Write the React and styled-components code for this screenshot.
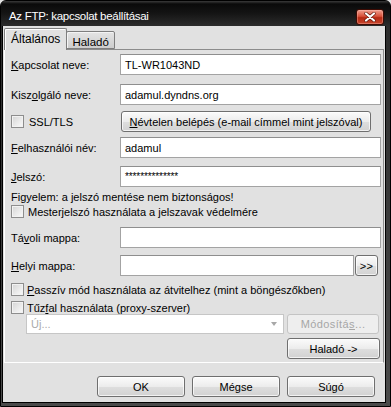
import React from 'react';
import styled, { createGlobalStyle } from 'styled-components';

const Global = createGlobalStyle`
  html, body { margin: 0; padding: 0; background: #e1e1e1; }
  body { font-family: "Liberation Sans", Arial, sans-serif; font-size: 11px; color: #000; }
  * { box-sizing: border-box; }
  u { text-decoration: underline; text-underline-offset: 1px; }
`;

const Window = styled.div`
  width: 391px;
  height: 407px;
  display: flex;
  flex-direction: column;
  border: 1px solid #000;
  border-radius: 6px 6px 0 0;
  background: linear-gradient(to bottom, #2a2a2a, #4a4a4a);
  overflow: hidden;
`;

const TitleBar = styled.div`
  height: 25px;
  flex: none;
  display: flex;
  align-items: flex-end;
  justify-content: space-between;
  padding: 0 6px 1px 8px;
  background: linear-gradient(to bottom, #3a3a3a 0px, #0a0a0a 3px, #141414 12px, #2c2c2c 25px);
`;

const TitleText = styled.span`
  align-self: center;
  margin-top: 6px;
  color: #fff;
  font-size: 11.5px;
  letter-spacing: -0.3px;
  line-height: 14px;
  white-space: nowrap;
`;

const CloseButton = styled.div`
  width: 28px;
  height: 16px;
  border: 1px solid #3d0b03;
  border-radius: 3px;
  background: linear-gradient(to bottom, #f0a090 0%, #d8513a 45%, #b52a14 55%, #c8452c 100%);
  display: flex;
  align-items: center;
  justify-content: center;
  box-shadow: inset 0 0 0 1px rgba(255, 200, 190, 0.35);
`;

const Body = styled.div`
  flex: 1;
  margin: 0 4px 3px 1px;
  border: 1px solid #000;
  border-top: none;
  background: #e1e1e1;
  padding: 2px 1px 4px 1px;
  display: flex;
  flex-direction: column;
`;

const TabStrip = styled.div`
  display: flex;
  align-items: flex-end;
  height: 22px;
  margin-bottom: -1px;
  position: relative;
  z-index: 1;
`;

const Tab = styled.div`
  height: ${p => (p.$active ? '22px' : '18px')};
  margin-bottom: ${p => (p.$active ? '0' : '1px')};
  margin-left: ${p => (p.$active ? '0' : '-1px')};
  padding: ${p => (p.$active ? '3px 6px 0 6px' : '3px 5px 0 5px')};
  border: 1px solid #7e7e7e;
  border-bottom: ${p => (p.$active ? 'none' : '1px solid #7e7e7e')};
  border-radius: 2px 2px 0 0;
  background: ${p => (p.$active ? '#e1e1e1' : 'linear-gradient(to bottom, #e4e4e4, #cdcdcd)')};
  box-shadow: ${p => (p.$active ? 'inset 1px 1px 0 #fff' : 'inset 1px 1px 0 #f4f4f4')};
  font-size: ${p => (p.$active ? '12px' : '11.5px')};
  line-height: 14px;
  white-space: nowrap;
`;

const Panel = styled.div`
  height: 314px;
  flex: none;
  border: 1px solid #8c8c8c;
  border-left-color: #fff;
  border-bottom-color: #fff;
  box-shadow: 0 0 0 0 transparent;
  padding: 0 2px 3px 6px;
  display: flex;
  flex-direction: column;
`;

const Row = styled.div`
  display: flex;
  align-items: center;
  height: ${p => p.$h}px;
  margin-top: ${p => p.$mt}px;
  padding-left: ${p => p.$indent || 0}px;
  justify-content: ${p => (p.$end ? 'flex-end' : 'flex-start')};
  gap: ${p => p.$gap || 0}px;
  flex: none;
`;

const Label = styled.label`
  width: 109px;
  flex: none;
  white-space: nowrap;
`;

const Text = styled.span`
  white-space: nowrap;
`;

const Field = styled.div`
  flex: 1;
  height: 21px;
  background: #fff;
  border: 1px solid #a3a3a3;
  border-top-color: #8e8e8e;
  padding: 0 4px;
  display: flex;
  align-items: center;
  white-space: nowrap;
  font-size: ${p => (p.$small ? '10px' : '11px')};
  letter-spacing: ${p => (p.$small ? '-0.1px' : '0')};
`;

const Button = styled.div`
  width: ${p => p.$w}px;
  height: ${p => p.$ht || 21}px;
  flex: none;
  margin-left: ${p => p.$ml || 0}px;
  margin-right: ${p => p.$mr || 0}px;
  border: 1px solid ${p => (p.$disabled ? '#c4c4c4' : '#6f6f6f')};
  border-radius: 3px;
  background: ${p =>
    p.$disabled
      ? '#eeeeee'
      : 'linear-gradient(to bottom, #fbfbfb 0%, #ececec 50%, #dedede 51%, #d2d2d2 100%)'};
  box-shadow: ${p => (p.$disabled ? 'none' : 'inset 0 0 0 1px rgba(255,255,255,0.7)')};
  color: ${p => (p.$disabled ? '#a6a6a6' : '#000')};
  display: flex;
  align-items: center;
  justify-content: center;
  white-space: nowrap;
  letter-spacing: ${p => (p.$wide ? '0.4px' : '0')};
`;

const Check = styled.span`
  width: 13px;
  height: 13px;
  flex: none;
  border: 1px solid #8d8d8d;
  background: linear-gradient(135deg, #d4d4d4 0%, #ececec 60%, #fafafa 100%);
  box-shadow: inset 0 0 0 1px #f2f2f2;
  margin-right: ${p => p.$mr || 3}px;
`;

const Combo = styled.div`
  flex: 1;
  height: 20px;
  background: #fff;
  border: 1px solid #c6c6c6;
  color: #ababab;
  display: flex;
  align-items: center;
  justify-content: space-between;
  padding: 0 6px 0 4px;
`;

const ComboArrow = styled.span`
  width: 0;
  height: 0;
  border-left: 3.5px solid transparent;
  border-right: 3.5px solid transparent;
  border-top: 4px solid #a8a8a8;
`;

const ButtonBar = styled.div`
  display: flex;
  justify-content: flex-end;
  gap: 7px;
  margin-top: 13px;
  margin-right: 9px;
`;

export default function App() {
  return (
    <>
      <Global />
      <Window>
        <TitleBar>
          <TitleText>Az FTP: kapcsolat beállításai</TitleText>
          <CloseButton>
            <svg width="14" height="10" viewBox="0 0 14 10">
              <path d="M3 1.5 L11 8.5 M11 1.5 L3 8.5" stroke="#5a1408" strokeWidth="3.4" strokeLinecap="round" />
              <path d="M3 1.5 L11 8.5 M11 1.5 L3 8.5" stroke="#fff" strokeWidth="2.2" strokeLinecap="round" />
            </svg>
          </CloseButton>
        </TitleBar>
        <Body>
          <TabStrip>
            <Tab $active>Általános</Tab>
            <Tab>Haladó</Tab>
          </TabStrip>
          <Panel>
            <Row $h={21} $mt={4}>
              <Label><u>K</u>apcsolat neve:</Label>
              <Field>TL-WR1043ND</Field>
            </Row>
            <Row $h={21} $mt={9}>
              <Label>Kisz<u>o</u>lgáló neve:</Label>
              <Field>adamul.dyndns.org</Field>
            </Row>
            <Row $h={21} $mt={6}>
              <Label as="div" style={{ display: 'flex', alignItems: 'center' }}>
                <Check $mr={5} />
                <Text>SSL/TLS</Text>
              </Label>
              <Button $w={250} $ml={1}><span><u>N</u>évtelen belépés (e-mail címmel mint jelszóval)</span></Button>
            </Row>
            <Row $h={21} $mt={5}>
              <Label><u>F</u>elhasználói név:</Label>
              <Field>adamul</Field>
            </Row>
            <Row $h={21} $mt={8}>
              <Label><u>J</u>elszó:</Label>
              <Field $small>**************</Field>
            </Row>
            <Row $h={13} $mt={3}>
              <Text>Figyelem: a jelszó mentése nem biztonságos!</Text>
            </Row>
            <Row $h={13} $mt={2}>
              <Check $mr={4} />
              <Text>Mesterjelszó használata a jelszavak védelmére</Text>
            </Row>
            <Row $h={21} $mt={9}>
              <Label>Tá<u>v</u>oli mappa:</Label>
              <Field />
            </Row>
            <Row $h={21} $mt={7}>
              <Label><u>H</u>elyi mappa:</Label>
              <Field />
              <Button $w={23} $ml={1} $mr={3} $wide>&gt;&gt;</Button>
            </Row>
            <Row $h={13} $mt={7}>
              <Check $mr={3} />
              <Text><u>P</u>asszív mód használata az átvitelhez (mint a böngészőkben)</Text>
            </Row>
            <Row $h={13} $mt={5}>
              <Check $mr={3} />
              <Text>Tűz<u>f</u>al használata (proxy-szerver)</Text>
            </Row>
            <Row $h={20} $mt={0} $indent={15} $gap={3}>
              <Combo>
                <span>Új...</span>
                <ComboArrow />
              </Combo>
              <Button $w={92} $ht={20} $mr={2} $disabled $wide>
                <span>Módosítá<u>s</u>...</span>
              </Button>
            </Row>
            <Row $h={21} $mt={4} $end>
              <Button $w={93} $mr={1}>Haladó -&gt;</Button>
            </Row>
          </Panel>
          <ButtonBar>
            <Button $w={88}>OK</Button>
            <Button $w={88}>Mégse</Button>
            <Button $w={88}>Súgó</Button>
          </ButtonBar>
        </Body>
      </Window>
    </>
  );
}
